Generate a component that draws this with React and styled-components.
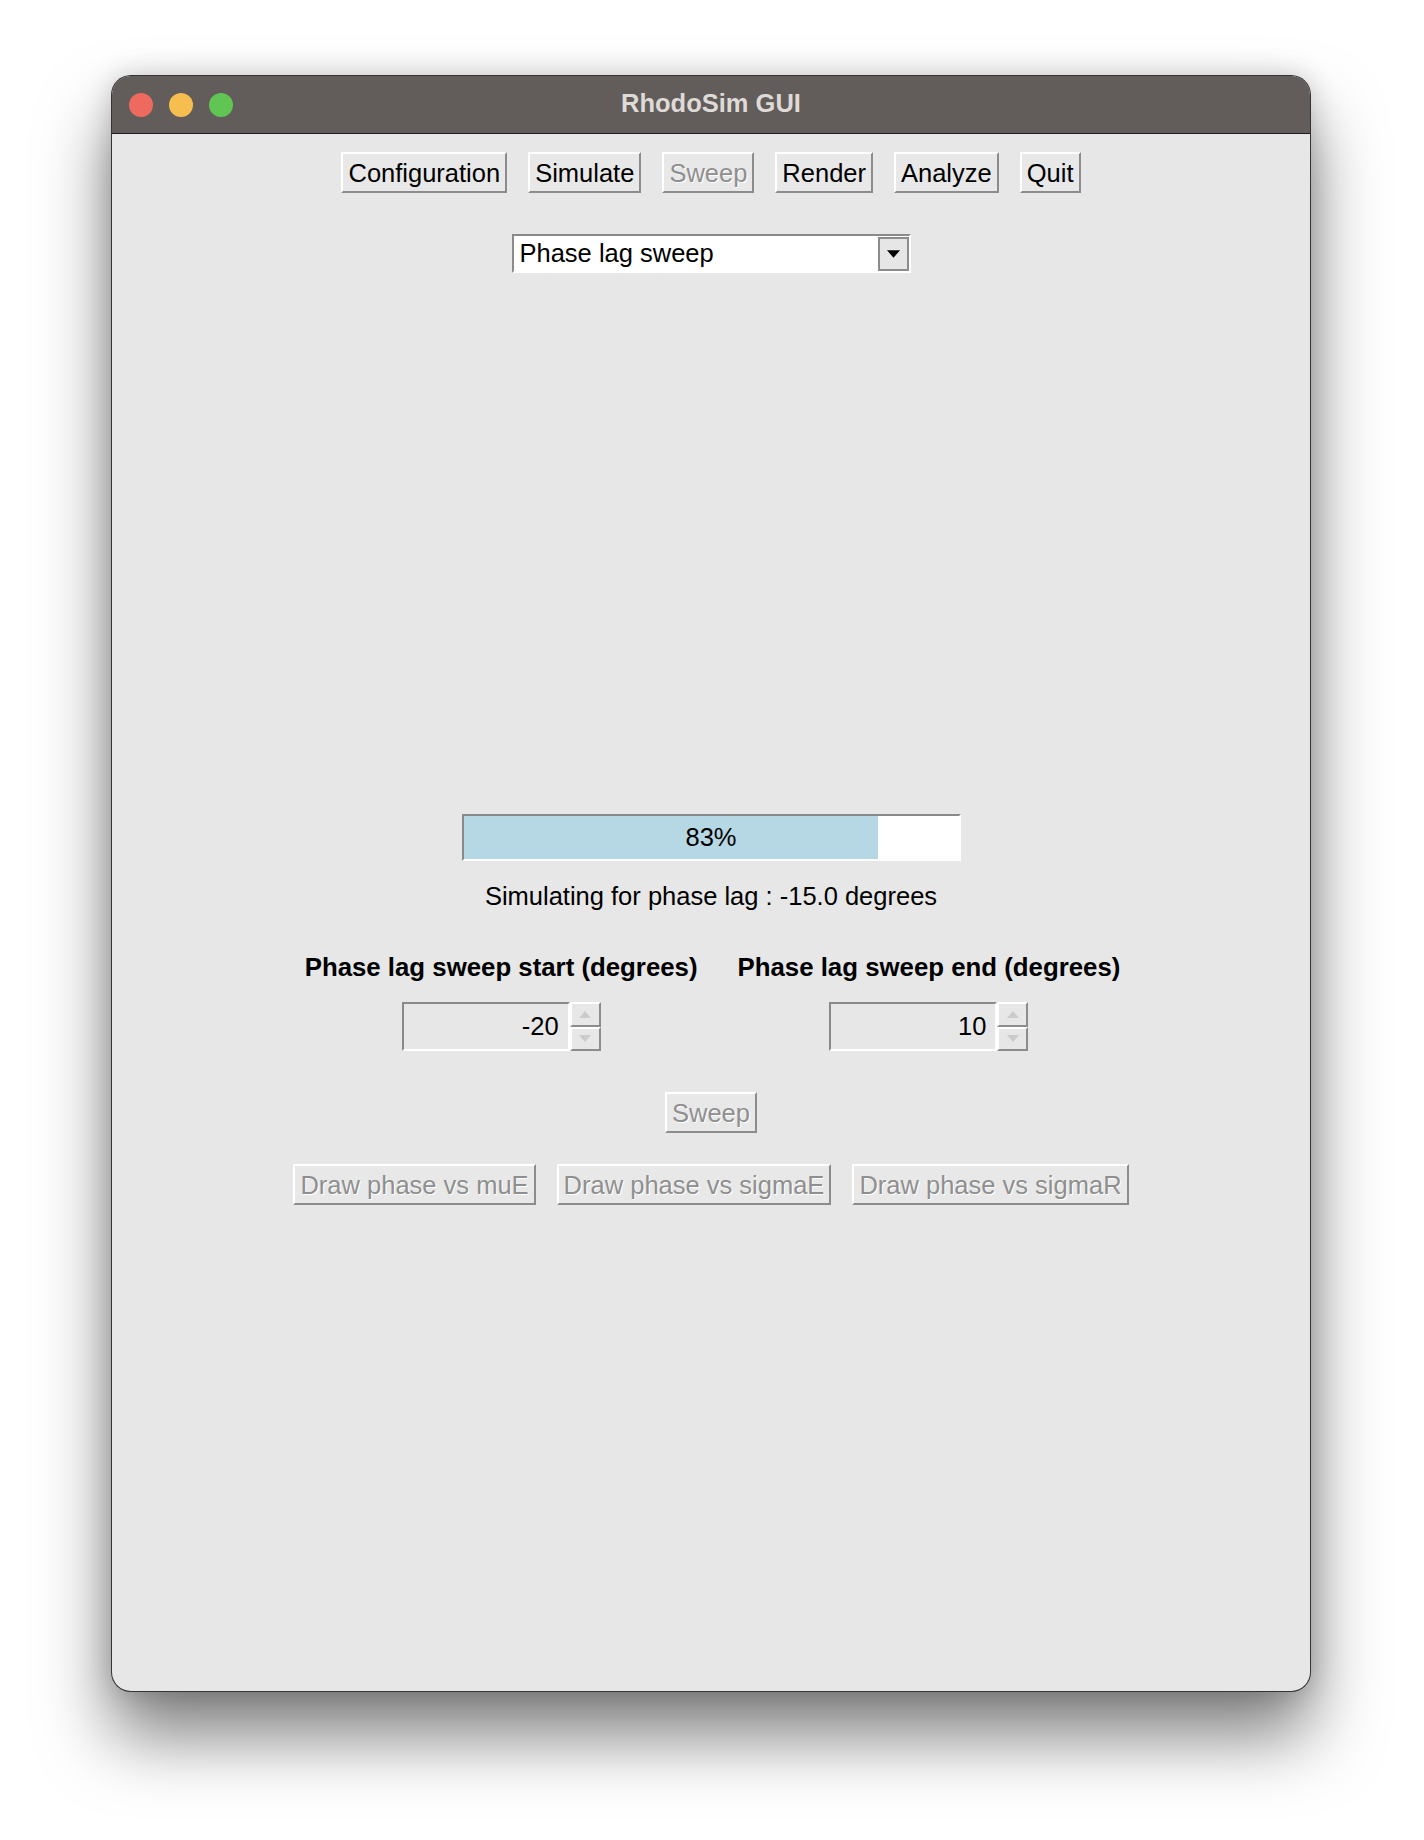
import React from "react";
import styled, { createGlobalStyle, css } from "styled-components";

const Global = createGlobalStyle`
  html, body { margin: 0; padding: 0; background: #ffffff; }
  body { width: 1424px; height: 1840px; overflow: hidden; font-family: "Liberation Sans", Arial, sans-serif; }
`;

const Page = styled.div`
  padding: 75px 0 0 111px;
`;

const Window = styled.div`
  width: 1200px;
  height: 1617px;
  box-sizing: border-box;
  border: 1px solid rgba(20, 20, 20, 0.85);
  border-radius: 20px;
  overflow: hidden;
  background: #e7e7e7;
  box-shadow: 0 44px 70px rgba(0, 0, 0, 0.5), 0 0 28px rgba(0, 0, 0, 0.18);
  display: flex;
  flex-direction: column;
`;

const TitleBar = styled.div`
  height: 57px;
  flex: none;
  background: #625d5a;
  border-bottom: 1px solid #1c1c1c;
  display: grid;
  grid-template-columns: 1fr auto 1fr;
  align-items: center;
  padding: 0 17px;
`;

const Lights = styled.div`
  display: flex;
  gap: 16px;
`;

const Light = styled.span`
  width: 24px;
  height: 24px;
  border-radius: 50%;
  background: ${(p) => p.$color};
`;

const Title = styled.div`
  font-family: "Liberation Sans", Arial, sans-serif;
  font-weight: bold;
  font-size: 25.5px;
  color: #dedad7;
  padding-bottom: 2px;
`;

const Content = styled.div`
  display: flex;
  flex-direction: column;
  align-items: center;
  padding-top: 18px;
`;

const ButtonRow = styled.div`
  display: flex;
  gap: 21px;
  justify-content: center;
  margin-top: ${(p) => p.$top || 0}px;
`;

const disabledText = css`
  color: #8f8f8f;
  text-shadow: 1px 1px 0 #ffffff;
`;

const Button = styled.button`
  box-sizing: border-box;
  height: 41px;
  padding: 0 5px;
  margin: 0;
  font-family: "Liberation Sans", Arial, sans-serif;
  font-size: 25.5px;
  line-height: 30px;
  background: #e8e8e8;
  border-style: solid;
  border-width: 2px;
  border-color: #ffffff #8c8c8c #8c8c8c #ffffff;
  border-radius: 0;
  color: #000000;
  ${(p) => p.disabled && disabledText}
`;

const Combo = styled.div`
  box-sizing: border-box;
  margin-top: 41px;
  width: 399px;
  height: 39px;
  background: #ffffff;
  border-style: solid;
  border-width: 2px;
  border-color: #8a8a8a #ffffff #ffffff #8a8a8a;
  display: flex;
  align-items: center;
  justify-content: space-between;
  padding: 0 0 0 6px;
`;

const ComboText = styled.span`
  font-size: 25.5px;
  color: #000;
`;

const ComboArrow = styled.div`
  box-sizing: border-box;
  width: 31px;
  height: 34px;
  background: #e6e6e6;
  border: 2px solid #8c8c8c;
  display: flex;
  align-items: center;
  justify-content: center;
`;

const Spacer = styled.div`
  height: 541px;
`;

const Progress = styled.div`
  box-sizing: border-box;
  position: relative;
  width: 499px;
  height: 47px;
  background: #ffffff;
  border-style: solid;
  border-width: 2px;
  border-color: #8a8a8a #ffffff #ffffff #8a8a8a;
`;

const ProgressFill = styled.div`
  height: 100%;
  background: #b6d8e4;
`;

const ProgressLabel = styled.div`
  position: absolute;
  inset: 0;
  display: flex;
  align-items: center;
  justify-content: center;
  font-size: 25.5px;
  color: #000;
`;

const Status = styled.div`
  margin-top: 20px;
  font-size: 25.5px;
  line-height: 30px;
  color: #000;
`;

const SweepGrid = styled.div`
  margin-top: 41px;
  display: grid;
  grid-template-columns: auto auto;
  column-gap: 40px;
  row-gap: 20px;
  justify-items: center;
  margin-left: 3px;
`;

const BoldLabel = styled.div`
  font-weight: bold;
  font-size: 25.8px;
  line-height: 30px;
  color: #000;
`;

const Spin = styled.div`
  display: flex;
  height: 49px;
`;

const SpinEntry = styled.div`
  box-sizing: border-box;
  width: 168px;
  height: 49px;
  border-style: solid;
  border-width: 2px;
  border-color: #8a8a8a #ffffff #ffffff #8a8a8a;
  display: flex;
  align-items: center;
  justify-content: flex-end;
  padding-right: 9px;
  font-size: 25.5px;
  color: #000;
`;

const SpinArrows = styled.div`
  display: flex;
  flex-direction: column;
  width: 31px;
`;

const SpinBtn = styled.div`
  box-sizing: border-box;
  flex: 1;
  border-style: solid;
  border-width: 2px;
  border-color: #ffffff #8c8c8c #8c8c8c #ffffff;
  display: flex;
  align-items: center;
  justify-content: center;
`;

const Tri = ({ up, color, w = 12, h = 7 }) => (
  <svg width={w} height={h} viewBox="0 0 12 7">
    {up ? (
      <polygon points="0,7 12,7 6,0" fill={color} />
    ) : (
      <polygon points="0,0 12,0 6,7" fill={color} />
    )}
  </svg>
);

const SpinBox = ({ value }) => (
  <Spin>
    <SpinEntry>{value}</SpinEntry>
    <SpinArrows>
      <SpinBtn>
        <Tri up color="#cbcbcb" />
      </SpinBtn>
      <SpinBtn>
        <Tri color="#cbcbcb" />
      </SpinBtn>
    </SpinArrows>
  </Spin>
);

export default function App() {
  const pct = 83.7;
  return (
    <>
      <Global />
      <Page>
        <Window>
          <TitleBar>
            <Lights>
              <Light $color="#ee6a5f" />
              <Light $color="#f5be4f" />
              <Light $color="#61c554" />
            </Lights>
            <Title>RhodoSim GUI</Title>
            <div />
          </TitleBar>
          <Content>
            <ButtonRow>
              <Button>Configuration</Button>
              <Button>Simulate</Button>
              <Button disabled>Sweep</Button>
              <Button>Render</Button>
              <Button>Analyze</Button>
              <Button>Quit</Button>
            </ButtonRow>
            <Combo>
              <ComboText>Phase lag sweep</ComboText>
              <ComboArrow>
                <Tri color="#000" w={13} h={8} />
              </ComboArrow>
            </Combo>
            <Spacer />
            <Progress>
              <ProgressFill style={{ width: `${pct}%` }} />
              <ProgressLabel>83%</ProgressLabel>
            </Progress>
            <Status>Simulating for phase lag : -15.0 degrees</Status>
            <SweepGrid>
              <BoldLabel>Phase lag sweep start (degrees)</BoldLabel>
              <BoldLabel>Phase lag sweep end (degrees)</BoldLabel>
              <SpinBox value="-20" />
              <SpinBox value="10" />
            </SweepGrid>
            <ButtonRow $top={41}>
              <Button disabled>Sweep</Button>
            </ButtonRow>
            <ButtonRow $top={31}>
              <Button disabled>Draw phase vs muE</Button>
              <Button disabled>Draw phase vs sigmaE</Button>
              <Button disabled>Draw phase vs sigmaR</Button>
            </ButtonRow>
          </Content>
        </Window>
      </Page>
    </>
  );
}
